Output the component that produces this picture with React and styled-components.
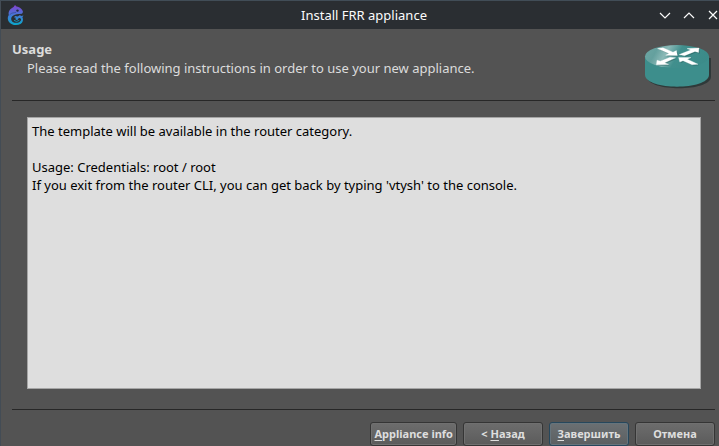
import React from "react";
import styled, { createGlobalStyle } from "styled-components";

const GlobalStyle = createGlobalStyle`
  * { box-sizing: border-box; }
  body {
    margin: 0;
    background: #535353;
    font-family: "Noto Sans", "Open Sans", sans-serif;
    font-size: 13px;
    line-height: 18px;
  }
`;

const Dialog = styled.div`
  display: flex;
  flex-direction: column;
  min-height: 100vh;
  background: #535353;
  border-top: 1px solid #414d57;
  border-left: 1px solid #434c55;
`;

const TitleBar = styled.header`
  display: grid;
  grid-template-columns: 69px 1fr 66px;
  align-items: center;
  height: 28px;
  padding-left: 5px;
  background: #2a2e32;
  color: #fcfcfc;
`;

const Title = styled.h1`
  margin: 0;
  text-align: center;
  font-size: 13px;
  font-weight: 400;
`;

const WindowControls = styled.div`
  display: flex;
`;

const WindowButton = styled.button`
  display: flex;
  align-items: center;
  justify-content: ${(p) => (p.$edge ? "flex-end" : "center")};
  flex: none;
  width: ${(p) => (p.$edge ? 18 : 24)}px;
  height: 28px;
  padding: 0;
  border: 0;
  background: none;
  color: inherit;
`;

const Banner = styled.section`
  display: flex;
  justify-content: space-between;
  height: 72px;
  margin: 0 4px 0 11px;
  padding-top: 11px;
  border-bottom: 1px solid #272727;
  color: #dcdcdc;
`;

const BannerTitle = styled.h2`
  margin: 0;
  font-size: 13px;
  font-weight: 700;
`;

const BannerText = styled.p`
  margin: 1px 0 0 15px;
`;

const Content = styled.main`
  display: flex;
  flex: 1;
  padding: 16px 18px 20px 26px;
`;

const Instructions = styled.textarea`
  flex: 1;
  min-width: 0;
  padding: 4px;
  border: 1px solid #a5a5a5;
  border-radius: 0;
  outline: none;
  resize: none;
  background: #dedede;
  color: #000;
  font: inherit;
`;

const Footer = styled.footer`
  display: flex;
  justify-content: flex-end;
  gap: 6px;
  margin: 0 4px 0 11px;
`;

const Rule = styled.hr`
  height: 1px;
  margin: 0 4px 12px 11px;
  border: 0;
  background: #272727;
`;

const Button = styled.button`
  min-width: 80px;
  height: 24px;
  padding: 0 3px;
  border: 1px solid ${(p) => (p.$primary ? "#26475c" : "#353535")};
  border-radius: 3px;
  background: ${(p) =>
    p.$primary
      ? "linear-gradient(#6b7073, #5b5f61)"
      : "linear-gradient(#6d6d6d, #5b5b5b)"};
  box-shadow: inset 0 0 0 1px ${(p) => (p.$primary ? "#66747c" : "#707070")};
  color: #dedede;
  font-family: inherit;
  font-size: 11px;
  font-weight: 700;
  line-height: 18px;
  white-space: nowrap;
`;

const Mnemonic = styled.span`
  text-decoration: underline;
  text-decoration-thickness: 1px;
  text-underline-offset: 2px;
  text-decoration-skip-ink: none;
`;

function ChameleonIcon() {
  return (
    <svg width="20" height="22" viewBox="0 0 20 22" aria-hidden="true">
      <defs>
        <linearGradient id="skin" x1="0" y1="0" x2="0" y2="1">
          <stop offset="0" stopColor="#8541cf" />
          <stop offset="0.45" stopColor="#4b72d6" />
          <stop offset="1" stopColor="#08a9cb" />
        </linearGradient>
      </defs>
      <path
        fill="url(#skin)"
        d="M9 1 L10.5 2.6 C14 3 16.5 5.5 17 8 L16 9.8 L12.5 9.9 C10 10 7.5 11 6.3 12.2 C4.5 14 5 17 7.2 18.2 C10 19.6 14 18.7 15 16.3 C15.4 15 14.5 13.8 13 14 C12 14.2 12.3 15.9 11 15.9 C9.4 15.9 9 14.5 9.9 13.7 L7.8 13.2 L9.3 11.9 L11.7 12.6 L14 11.1 L15 12 L17.5 11.6 L16.4 13.2 C17.7 15.4 16.9 18.5 14.5 20 C10.8 22 5.3 21.2 3 18 C1.4 15.7 1.4 12.8 2.8 11 C2 7.5 4.2 4.5 7.6 3 Z"
      />
      <circle cx="11.5" cy="6.6" r="1.2" fill="#252b3d" />
      <path d="M3.6 10.8 C6 8.3 7.5 9.3 10 8.3" fill="none" stroke="#343f88" strokeWidth="0.6" />
      <path d="M8 16.4 L10.5 17.4 L13.3 16.4" fill="none" stroke="#158fb8" strokeWidth="1" />
    </svg>
  );
}

const GLYPHS = {
  minimize: "M1 4 L6 9 L11 4",
  maximize: "M1 9 L6 4 L11 9",
  close: "M2 2 L10 10 M10 2 L2 10",
};

function WindowGlyph({ kind }) {
  return (
    <svg width="12" height="12" viewBox="0 0 12 12" aria-hidden="true">
      <path d={GLYPHS[kind]} fill="none" stroke="currentColor" strokeWidth="1.2" />
    </svg>
  );
}

const RouterSvg = styled.svg`
  flex: none;
  margin-top: 4px;
`;

const ARROWS =
  "M13.5 4.6 L19 3.8 L29 8.2 L32.4 6.6 L33.4 11.6 L21.6 11.2 L25 9.6 Z " +
  "M35.2 10.6 L46.6 6 L43 4.6 L55 4 L54.6 8.4 L51 7.4 L40.4 11.8 Z " +
  "M31.6 13.8 L20.6 18.8 L24.6 20.4 L12.4 20.8 L13 16.2 L16.4 17.2 L26 13.2 Z " +
  "M34.6 13.4 L47 13.6 L43.4 15.2 L54 20.2 L48 20.8 L39 16.8 L35.8 18 Z";

function RouterIcon() {
  return (
    <RouterSvg width="71" height="46" viewBox="0 0 71 46" role="img" aria-label="Router">
      <defs>
        <linearGradient id="lid" x1="0" y1="0.4" x2="1" y2="0.6">
          <stop offset="0" stopColor="#6ba4a2" />
          <stop offset="0.14" stopColor="#64a09e" />
          <stop offset="0.3" stopColor="#8bb9b7" />
          <stop offset="0.5" stopColor="#418f8d" />
          <stop offset="1" stopColor="#3b8b89" />
        </linearGradient>
      </defs>
      <path d="M3 14 V33 C4 48 66 48 67 33 V14 Z" fill="#2f3939" />
      <path d="M1 12 V31 C2 46.5 64 46.5 65 31 V12 Z" fill="#3d8e8c" />
      <ellipse cx="33" cy="12.5" rx="32" ry="11.5" fill="url(#lid)" />
      <path d={ARROWS} fill="#1f5554" fillOpacity="0.5" transform="translate(1 1)" />
      <path d={ARROWS} fill="#fff" stroke="#fff" strokeWidth="0.3" />
    </RouterSvg>
  );
}

const INSTRUCTIONS = `The template will be available in the router category.

Usage: Credentials: root / root
If you exit from the router CLI, you can get back by typing 'vtysh' to the console.`;

export default function App() {
  return (
    <>
      <GlobalStyle />
      <Dialog>
        <TitleBar>
          <ChameleonIcon />
          <Title>Install FRR appliance</Title>
          <WindowControls>
            <WindowButton type="button" aria-label="Minimize">
              <WindowGlyph kind="minimize" />
            </WindowButton>
            <WindowButton type="button" aria-label="Maximize">
              <WindowGlyph kind="maximize" />
            </WindowButton>
            <WindowButton type="button" aria-label="Close" $edge>
              <WindowGlyph kind="close" />
            </WindowButton>
          </WindowControls>
        </TitleBar>
        <Banner>
          <div>
            <BannerTitle>Usage</BannerTitle>
            <BannerText>
              Please read the following instructions in order to use your new appliance.
            </BannerText>
          </div>
          <RouterIcon />
        </Banner>
        <Content>
          <Instructions readOnly aria-label="Usage instructions" defaultValue={INSTRUCTIONS} />
        </Content>
        <Rule />
        <Footer>
          <Button type="button"><Mnemonic>A</Mnemonic>ppliance info</Button>
          <Button type="button">&lt; <Mnemonic>Н</Mnemonic>азад</Button>
          <Button type="button" $primary><Mnemonic>З</Mnemonic>авершить</Button>
          <Button type="button">Отмена</Button>
        </Footer>
      </Dialog>
    </>
  );
}
